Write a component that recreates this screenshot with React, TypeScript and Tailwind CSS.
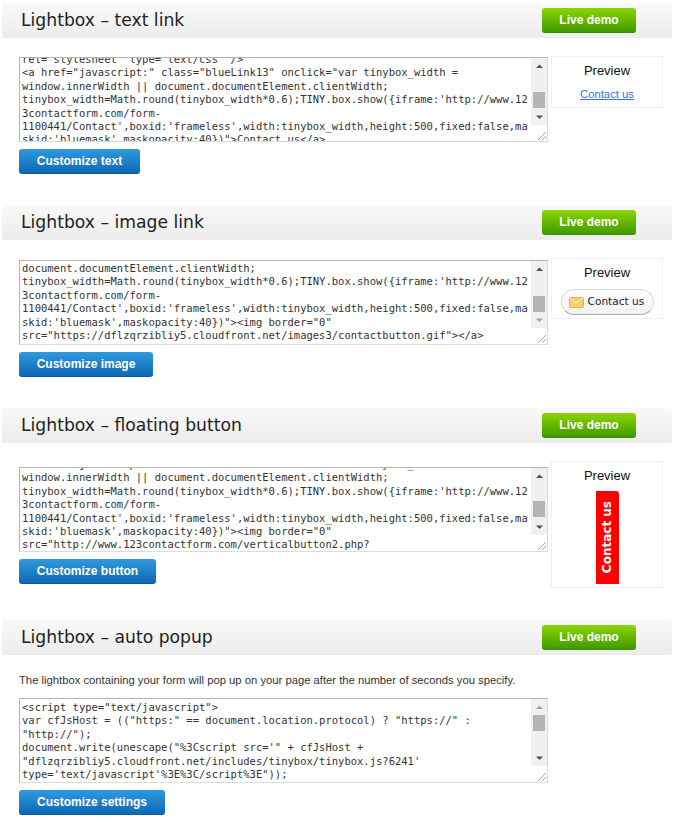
import React from 'react';

interface HeaderProps {
  title: string;
}

const SectionHeader: React.FC<HeaderProps> = ({ title }) => (
  <div className="ml-[2px] flex h-[35px] w-[670px] items-center justify-between rounded-[2px] bg-gradient-to-b from-[#f9f9f9] to-[#ececec] pl-[19px] pr-[36px]">
    <h2 className="font-['DejaVu_Sans',sans-serif] text-[17.2px] leading-[35px] font-normal text-[#222]">{title}</h2>
    <a className="flex h-[25px] w-[94px] items-center justify-center rounded-[3px] border-b border-[#3f8a00] bg-gradient-to-b from-[#8bd600] to-[#3f9a00] font-['Liberation_Sans',sans-serif] text-[12px] font-bold text-white">
      Live demo
    </a>
  </div>
);

const BlueButton: React.FC<{ label: string; width: string }> = ({ label, width }) => (
  <a className={`mt-[7px] flex h-[25px] items-center justify-center rounded-[3px] border-b border-[#0b5a9c] bg-gradient-to-b from-[#2f9ae0] to-[#0e68b4] font-['Liberation_Sans',sans-serif] text-[12px] font-bold text-white ${width}`}>
    {label}
  </a>
);

const Arrow: React.FC<{ up?: boolean; grey?: boolean }> = ({ up, grey }) => (
  <svg width="16" height="16" viewBox="0 0 16 16" className="shrink-0">
    <path d={up ? 'M5 10h7L8.5 6.5z' : 'M5 6.5h7L8.5 10z'} fill={grey ? '#a3a3a3' : '#505050'} />
  </svg>
);

const Grip = () => (
  <svg width="16" height="16" viewBox="0 0 16 16" className="shrink-0">
    <path d="M15 7L7 15M15 11l-4 4" stroke="#a8a8a8" strokeWidth="1" fill="none" />
  </svg>
);

interface CodeProps {
  lines: string[];
  offset: string;
  thumbTop: string;
  upGrey?: boolean;
  downGrey?: boolean;
}

const CodeBox: React.FC<CodeProps> = ({ lines, offset, thumbTop, upGrey, downGrey }) => (
  <div className="flex h-[85px] w-[529px] overflow-hidden border border-[#dcdcdc] border-t-[#b4b4b4] border-l-[#b4b4b4] bg-white">
    <div className="flex-1 overflow-hidden pl-[2px]">
      <pre className={`font-['DejaVu_Sans_Mono',monospace] text-[10.5px] leading-[13.4px] text-[#333] ${offset}`}>
        {lines.join('\n')}
      </pre>
    </div>
    <div className="flex w-[16px] shrink-0 flex-col">
      <div className="flex flex-1 flex-col items-center bg-[#f0f0f0]">
        <Arrow up grey={upGrey} />
        <div className={`h-[16px] w-[12px] shrink-0 bg-[#b5b5b5] ${thumbTop}`} />
        <div className="flex-1" />
        <Arrow grey={downGrey} />
      </div>
      <Grip />
    </div>
  </div>
);

const PreviewBox: React.FC<{ height: string; children: React.ReactNode }> = ({ height, children }) => (
  <div className={`ml-[3px] flex w-[112px] flex-col items-center border border-[#f0f0f0] ${height}`}>
    <div className="mt-[6px] font-['Liberation_Sans',sans-serif] text-[13px] leading-[16px] text-[#111]">Preview</div>
    {children}
  </div>
);

const textLink = [
  'rel="stylesheet" type="text/css" />',
  '<a href="javascript:" class="blueLink13" onclick="var tinybox_width =',
  'window.innerWidth || document.documentElement.clientWidth;',
  "tinybox_width=Math.round(tinybox_width*0.6);TINY.box.show({iframe:'http://www.12",
  '3contactform.com/form-',
  "1100441/Contact',boxid:'frameless',width:tinybox_width,height:500,fixed:false,ma",
  "skid:'bluemask',maskopacity:40})\">Contact us</a>",
];

const imageLink = [
  'document.documentElement.clientWidth;',
  "tinybox_width=Math.round(tinybox_width*0.6);TINY.box.show({iframe:'http://www.12",
  '3contactform.com/form-',
  "1100441/Contact',boxid:'frameless',width:tinybox_width,height:500,fixed:false,ma",
  "skid:'bluemask',maskopacity:40})\"><img border=\"0\"",
  'src="https://dflzqrzibliy5.cloudfront.net/images3/contactbutton.gif"></a>',
];

const floatingButton = [
  '<a href="javascript:" class="blueLink13" onclick="var tinybox_width =',
  'window.innerWidth || document.documentElement.clientWidth;',
  "tinybox_width=Math.round(tinybox_width*0.6);TINY.box.show({iframe:'http://www.12",
  '3contactform.com/form-',
  "1100441/Contact',boxid:'frameless',width:tinybox_width,height:500,fixed:false,ma",
  "skid:'bluemask',maskopacity:40})\"><img border=\"0\"",
  'src="http://www.123contactform.com/verticalbutton2.php?',
];

const autoPopup = [
  '<script type="text/javascript">',
  'var cfJsHost = (("https:" == document.location.protocol) ? "https://" :',
  '"http://");',
  'document.write(unescape("%3Cscript src=\'" + cfJsHost +',
  '"dflzqrzibliy5.cloudfront.net/includes/tinybox/tinybox.js?6241\'',
  "type='text/javascript'%3E%3C/script%3E\"));",
];

const App = () => (
  <div className="min-h-[822px] w-[674px] overflow-hidden bg-white pt-[3px]">
    <SectionHeader title="Lightbox – text link" />
    <div className="flex pt-[19px] pl-[19px]">
      <div>
        <CodeBox lines={textLink} offset="-mt-[5px]" thumbTop="mt-[18px]" />
        <BlueButton label="Customize text" width="w-[121px]" />
      </div>
      <PreviewBox height="h-[52px] -mt-[1px]">
        <a className="mt-[8px] font-['Liberation_Sans',sans-serif] text-[11.25px] leading-[14px] text-[#2f74e8] underline">Contact us</a>
      </PreviewBox>
    </div>

    <div className="mt-[31px]">
      <SectionHeader title="Lightbox – image link" />
    </div>
    <div className="flex pt-[20px] pl-[19px]">
      <div>
        <CodeBox lines={imageLink} offset="mt-[1px]" thumbTop="mt-[19px]" downGrey />
        <BlueButton label="Customize image" width="w-[134px]" />
      </div>
      <PreviewBox height="h-[61px] -mt-[2px]">
        <div className="mt-[8px] flex h-[26px] w-[93px] items-center gap-[4px] rounded-full border border-[#d8d8d8] border-b-[#a8a8a8] bg-gradient-to-b from-white to-[#f0f0f0] pl-[7px] font-['DejaVu_Sans',sans-serif] text-[10.6px] text-[#222]">
          <svg width="15" height="11" viewBox="0 0 15 11" className="shrink-0">
            <rect x="0.5" y="0.5" width="14" height="10" rx="1" fill="#f7cf6e" stroke="#e8b548" />
            <path d="M1 1l6.5 5L14 1" fill="none" stroke="#fff3c4" />
          </svg>
          <span>Contact us</span>
        </div>
      </PreviewBox>
    </div>

    <div className="mt-[31px]">
      <SectionHeader title="Lightbox – floating button" />
    </div>
    <div className="flex pt-[24px] pl-[19px]">
      <div>
        <CodeBox lines={floatingButton} offset="-mt-[10px]" thumbTop="mt-[17px]" />
        <BlueButton label="Customize button" width="w-[137px]" />
      </div>
      <PreviewBox height="h-[127px] -mt-[6px]">
        <div className="mt-[7px] flex h-[93px] w-[23px] items-center justify-center rounded-tr-[3px] bg-[#ff0000]">
          <span className="rotate-180 font-['DejaVu_Sans',sans-serif] text-[12px] font-bold whitespace-nowrap text-white [writing-mode:vertical-rl]">Contact us</span>
        </div>
      </PreviewBox>
    </div>

    <div className="mt-[32px]">
      <SectionHeader title="Lightbox – auto popup" />
    </div>
    <div className="pt-[18px] pl-[19px]">
      <p className="font-['Liberation_Sans',sans-serif] text-[11.25px] leading-[14px] text-[#333]">
        The lightbox containing your form will pop up on your page after the number of seconds you specify.
      </p>
      <div className="mt-[11px]">
        <CodeBox lines={autoPopup} offset="mt-[2px]" thumbTop="mt-0" upGrey />
      </div>
      <BlueButton label="Customize settings" width="w-[146px]" />
    </div>
  </div>
);

export default App;
